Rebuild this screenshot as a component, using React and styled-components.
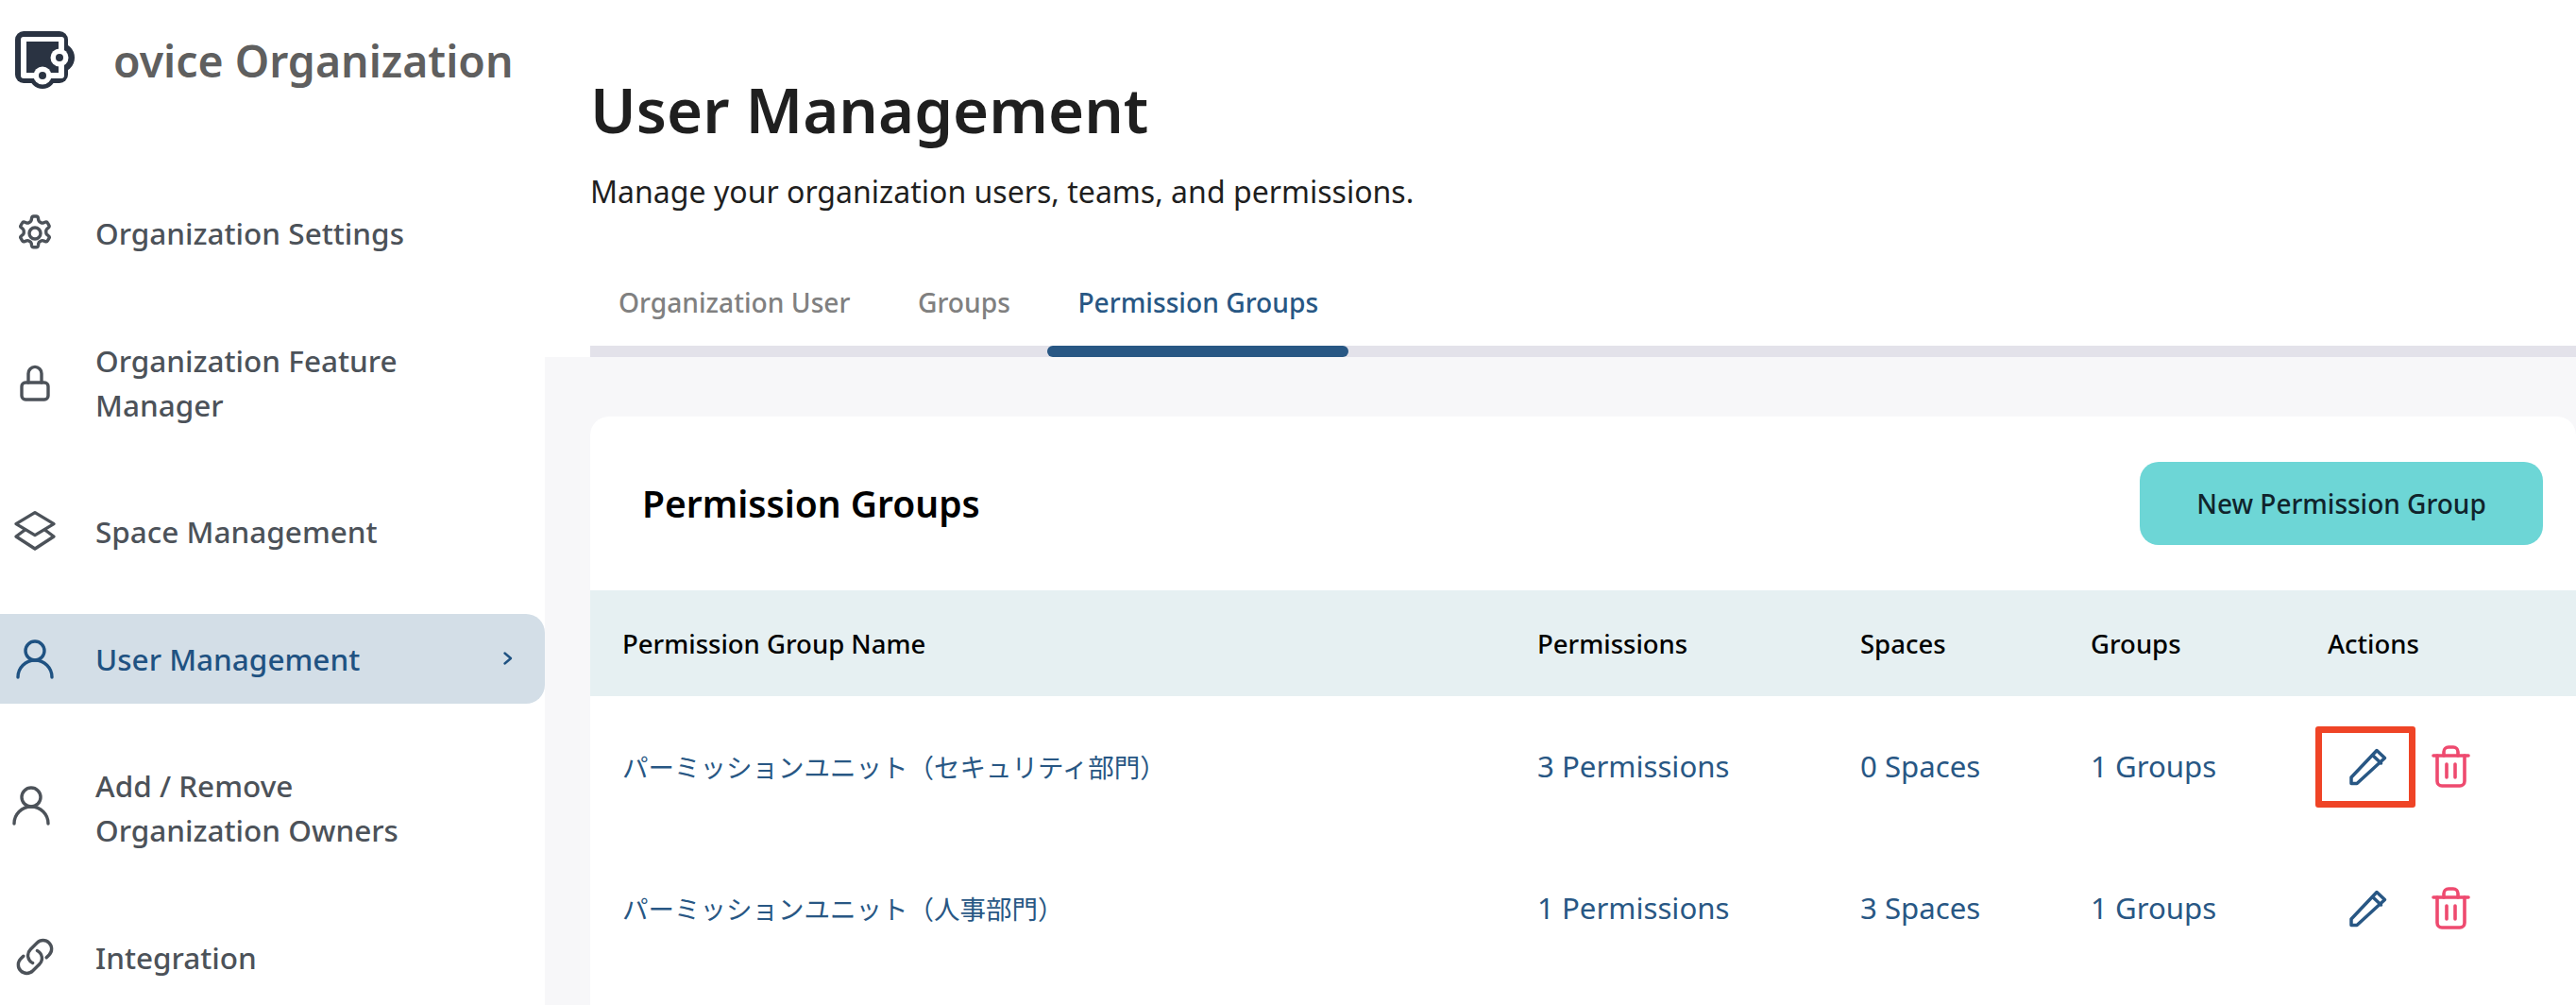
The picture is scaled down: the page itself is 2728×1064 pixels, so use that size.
import React from "react";
import styled, { createGlobalStyle } from "styled-components";

const GlobalStyle = createGlobalStyle`
  html, body {
    margin: 0;
    padding: 0;
    background: #ffffff;
  }
  body {
    font-family: "Noto Sans", "Noto Sans CJK JP", sans-serif;
    overflow: hidden;
  }
  * {
    box-sizing: border-box;
  }
`;

const Logo = () => (
  <svg width="64" height="62" viewBox="0 0 64 62">
    <rect x="0" y="0" width="56" height="55" rx="9" fill="#2a3342" />
    <circle cx="47" cy="28" r="16" fill="#2a3342" />
    <circle cx="29" cy="47" r="14" fill="#2a3342" />
    <rect x="6" y="6" width="46" height="44" rx="3" fill="#fff" />
    <rect x="12" y="11" width="34" height="33" fill="#2a3342" />
    <circle cx="47" cy="28" r="9.500" fill="#fff" />
    <circle cx="47" cy="28" r="4" fill="#2a3342" />
    <circle cx="29" cy="47" r="9.500" fill="#fff" />
    <circle cx="29" cy="47" r="4" fill="#2a3342" />
  </svg>
);

const Stroke = ({ children }) => (
  <svg width="48" height="48" viewBox="0 0 24 24" fill="none" stroke="currentColor" strokeWidth="1.700" strokeLinecap="round" strokeLinejoin="round">
    {children}
  </svg>
);

const GearIcon = () => (
  <Stroke>
    <path d="M10.300 3.900c.1-.5.5-.9 1-.9h1.400c.5 0 .9.4 1 .9l.2 1.200c.1.4.3.7.7.9l.7.4c.3.2.7.2 1.100.1l1.100-.4c.5-.2 1 0 1.200.4l.7 1.200c.3.4.2 1-.2 1.300l-.9.8c-.3.3-.5.6-.4 1v.8c0 .4.1.7.4 1l.9.8c.4.3.5.9.2 1.300l-.7 1.200c-.2.4-.7.6-1.200.4l-1.100-.4c-.4-.1-.8-.1-1.100.1l-.7.4c-.4.2-.6.5-.7.9l-.2 1.200c-.1.5-.5.9-1 .9h-1.400c-.5 0-.9-.4-1-.9l-.2-1.200c-.1-.4-.3-.7-.7-.9l-.7-.4c-.3-.2-.7-.2-1.100-.1l-1.100.4c-.5.2-1 0-1.200-.4l-.7-1.200c-.3-.4-.2-1 .2-1.300l.9-.8c.3-.3.5-.6.4-1v-.8c0-.4-.1-.7-.4-1l-.9-.8c-.4-.3-.5-.9-.2-1.300l.7-1.200c.2-.4.7-.6 1.200-.4l1.100.4c.4.1.8.1 1.100-.1l.7-.4c.4-.2.6-.5.7-.9z" />
    <circle cx="12" cy="12" r="3" />
  </Stroke>
);

const LockIcon = () => (
  <Stroke>
    <path d="M8.500 12V7.200a3.500 3.500 0 0 1 7 0V12" />
    <rect x="5" y="12" width="14" height="9" rx="2" />
  </Stroke>
);

const LayersIcon = () => (
  <Stroke>
    <path d="M12 1.800l10 6-10 6-10-6z" />
    <path d="M6.700 11L2 14.500l10 6.500 10-6.500-4.700-3.500" />
  </Stroke>
);

const UserIcon = () => (
  <Stroke>
    <circle cx="12" cy="8" r="5" />
    <path d="M3 22c0-5 4-9 9-9s9 4 9 9" />
  </Stroke>
);

const LinkIcon = () => (
  <Stroke>
    <path d="M13.200 8.700a4.500 4.500 0 0 1 1.200 7.200l-3.500 3.500a4.500 4.500 0 0 1-6.400-6.400l1.400-1.400" />
    <path d="M10.800 15.300a4.500 4.500 0 0 1-1.200-7.200l3.500-3.500a4.500 4.500 0 0 1 6.400 6.400l-1.400 1.400" />
  </Stroke>
);

const ChevronIcon = () => (
  <svg width="12" height="16" viewBox="0 0 12 16" fill="none" stroke="currentColor" strokeWidth="2.400" strokeLinecap="round" strokeLinejoin="round">
    <path d="M2.500 2.500L9 8l-6.500 5.500" />
  </svg>
);

const PencilIcon = () => (
  <svg width="42" height="42" viewBox="0 0 42 42" fill="none" stroke="#285784" strokeWidth="3.500" strokeLinejoin="round" strokeLinecap="round">
    <path d="M3 32L30 3.500l8.500 8L9 38.500H3z" />
    <path d="M25.500 8.500l9 8.500" />
  </svg>
);

const TrashIcon = () => (
  <svg width="41" height="46" viewBox="0 0 41 46" fill="none" stroke="#ee4a6f" strokeWidth="3.600" strokeLinecap="round" strokeLinejoin="round">
    <path d="M2 11h37" />
    <path d="M13 11V7a5 5 0 0 1 5-5h5a5 5 0 0 1 5 5v4" />
    <path d="M6 11v27a5 5 0 0 0 5 5h19a5 5 0 0 0 5-5V11" />
    <path d="M16 20v14M25 20v14" />
  </svg>
);

const navItems = [
  { icon: <GearIcon />, label: "Organization Settings" },
  { icon: <LockIcon />, label: <>Organization Feature<br />Manager</> },
  { icon: <LayersIcon />, label: "Space Management" },
  { icon: <UserIcon />, label: "User Management", active: true },
  { icon: <UserIcon />, label: <>Add / Remove<br />Organization Owners</>, shift: true },
  { icon: <LinkIcon />, label: "Integration" },
];

const rows = [
  { name: "パーミッションユニット（セキュリティ部門）", permissions: "3 Permissions", spaces: "0 Spaces", groups: "1 Groups", marked: true },
  { name: "パーミッションユニット（人事部門）", permissions: "1 Permissions", spaces: "3 Spaces", groups: "1 Groups" },
];

const App = () => {
  return (
    <Page>
      <GlobalStyle />
      <Sidebar>
        <Brand>
          <Logo />
          <BrandName>ovice Organization</BrandName>
        </Brand>
        <Nav>
          {navItems.map((item, i) => (
            <NavItem key={i} $active={item.active}>
              <NavIcon $shift={item.shift}>{item.icon}</NavIcon>
              <NavLabel>{item.label}</NavLabel>
              {item.active && (
                <NavChevron>
                  <ChevronIcon />
                </NavChevron>
              )}
            </NavItem>
          ))}
        </Nav>
      </Sidebar>
      <Main>
        <Header>
          <Title>User Management</Title>
          <Subtitle>Manage your organization users, teams, and permissions.</Subtitle>
          <Tabs>
            <Tab>Organization User</Tab>
            <Tab>Groups</Tab>
            <Tab $active>Permission Groups</Tab>
          </Tabs>
        </Header>
        <Content>
          <Card>
            <CardHeader>
              <CardTitle>Permission Groups</CardTitle>
              <PrimaryButton>New Permission Group</PrimaryButton>
            </CardHeader>
            <HeadRow>
              <span>Permission Group Name</span>
              <span>Permissions</span>
              <span>Spaces</span>
              <span>Groups</span>
              <span>Actions</span>
            </HeadRow>
            {rows.map((row) => (
              <BodyRow key={row.name}>
                <NameCell>{row.name}</NameCell>
                <Cell>{row.permissions}</Cell>
                <Cell>{row.spaces}</Cell>
                <Cell>{row.groups}</Cell>
                <Actions>
                  <EditButton $marked={row.marked}>
                    <PencilIcon />
                  </EditButton>
                  <TrashIcon />
                </Actions>
              </BodyRow>
            ))}
          </Card>
        </Content>
      </Main>
    </Page>
  );
};

const Page = styled.div`
  display: flex;
  width: 2728px;
  height: 1064px;
  overflow: hidden;
  background: #ffffff;
`;

const Sidebar = styled.aside`
  flex: none;
  width: 577px;
  height: 100%;
  background: #ffffff;
`;

const Brand = styled.div`
  display: flex;
  align-items: center;
  gap: 40px;
  height: 62px;
  margin-top: 33px;
  padding-left: 16px;
`;

const BrandName = styled.div`
  font-size: 46.400px;
  font-weight: 600;
  line-height: 62px;
  color: #5f5f5f;
  white-space: nowrap;
`;

const Nav = styled.nav`
  display: flex;
  flex-direction: column;
  gap: 39.500px;
  margin-top: 104px;
`;

const NavItem = styled.div`
  display: flex;
  align-items: center;
  padding: 24px 16px 24px 13px;
  border-radius: 0 20px 20px 0;
  font-size: 31.500px;
  font-weight: 500;
  line-height: 47px;
  color: ${(p) => (p.$active ? "#1f5282" : "#4c5259")};
  background: ${(p) => (p.$active ? "#d3dee7" : "transparent")};
`;

const NavIcon = styled.span`
  display: flex;
  flex: none;
  width: 48px;
  height: 48px;
  margin: -4px 40px -4px 0;
  transform: translate(${(p) => (p.$shift ? "-4px, -3px" : "0, 0")});
`;

const NavLabel = styled.span`
  flex: 1;
  white-space: nowrap;
`;

const NavChevron = styled.span`
  display: flex;
  margin-right: 17px;
`;

const Main = styled.main`
  flex: 1;
  min-width: 0;
  display: flex;
  flex-direction: column;
`;

const Header = styled.header`
  flex: none;
  height: 378px;
  padding: 71px 0 0 48px;
`;

const Title = styled.h1`
  margin: 0;
  font-size: 65.300px;
  font-weight: 600;
  line-height: 90px;
  color: #1f1f1f;
`;

const Subtitle = styled.p`
  margin: 20px 0 0;
  font-size: 32.050px;
  line-height: 44px;
  color: #1f1f1f;
`;

const Tabs = styled.div`
  display: flex;
  gap: 7.500px;
  height: 152px;
  margin-top: 1px;
  padding-top: 48px;
  align-items: stretch;
  border-bottom: 12px solid #e3e2ea;
`;

const Tab = styled.div`
  position: relative;
  display: flex;
  align-items: center;
  padding: 0 32px;
  font-size: 28.200px;
  font-weight: 500;
  color: ${(p) => (p.$active ? "#285784" : "#808080")};

  &:first-child {
    margin-left: -2px;
  }

  ${(p) =>
    p.$active &&
    `
    &::after {
      content: "";
      position: absolute;
      left: 0;
      right: 0;
      bottom: -12px;
      height: 12px;
      border-radius: 6px;
      background: #285784;
    }
  `}
`;

const Content = styled.div`
  flex: 1;
  min-height: 0;
  padding: 63px 0 0 48px;
  background: #f7f7f9;
`;

const Card = styled.section`
  height: 100%;
  background: #ffffff;
  border-radius: 20px 20px 0 0;
`;

const CardHeader = styled.div`
  display: flex;
  align-items: center;
  justify-content: space-between;
  height: 184px;
  padding: 0 35px 0 55px;
`;

const CardTitle = styled.h2`
  margin: -2px 0 0;
  font-size: 39px;
  font-weight: 600;
  color: #000000;
`;

const PrimaryButton = styled.button`
  width: 427px;
  height: 88px;
  border: none;
  border-radius: 20px;
  background: #6dd6d6;
  font-family: inherit;
  font-size: 28px;
  font-weight: 500;
  color: #10242c;
`;

const rowGrid = `
  display: grid;
  grid-template-columns: 969px 342px 244px 251px 1fr;
  align-items: center;
  padding-left: 34px;
`;

const HeadRow = styled.div`
  ${rowGrid}
  height: 112px;
  background: #e6f0f2;
  font-size: 27.500px;
  font-weight: 500;
  color: #000000;
`;

const BodyRow = styled.div`
  ${rowGrid}
  height: 150px;
  color: #285784;
`;

const Cell = styled.span`
  margin-top: -2px;
  font-size: 31.200px;
`;

const NameCell = styled(Cell)`
  font-size: 27.500px;
`;

const Actions = styled.div`
  display: flex;
  align-items: center;
`;

const EditButton = styled.div`
  display: flex;
  align-items: center;
  justify-content: center;
  width: 106px;
  height: 86px;
  margin-left: -13px;
  margin-right: 17px;
  padding-left: 6px;
  border-radius: 3px;
  border: 7px solid ${(p) => (p.$marked ? "#ef4426" : "transparent")};
`;

export default App;
